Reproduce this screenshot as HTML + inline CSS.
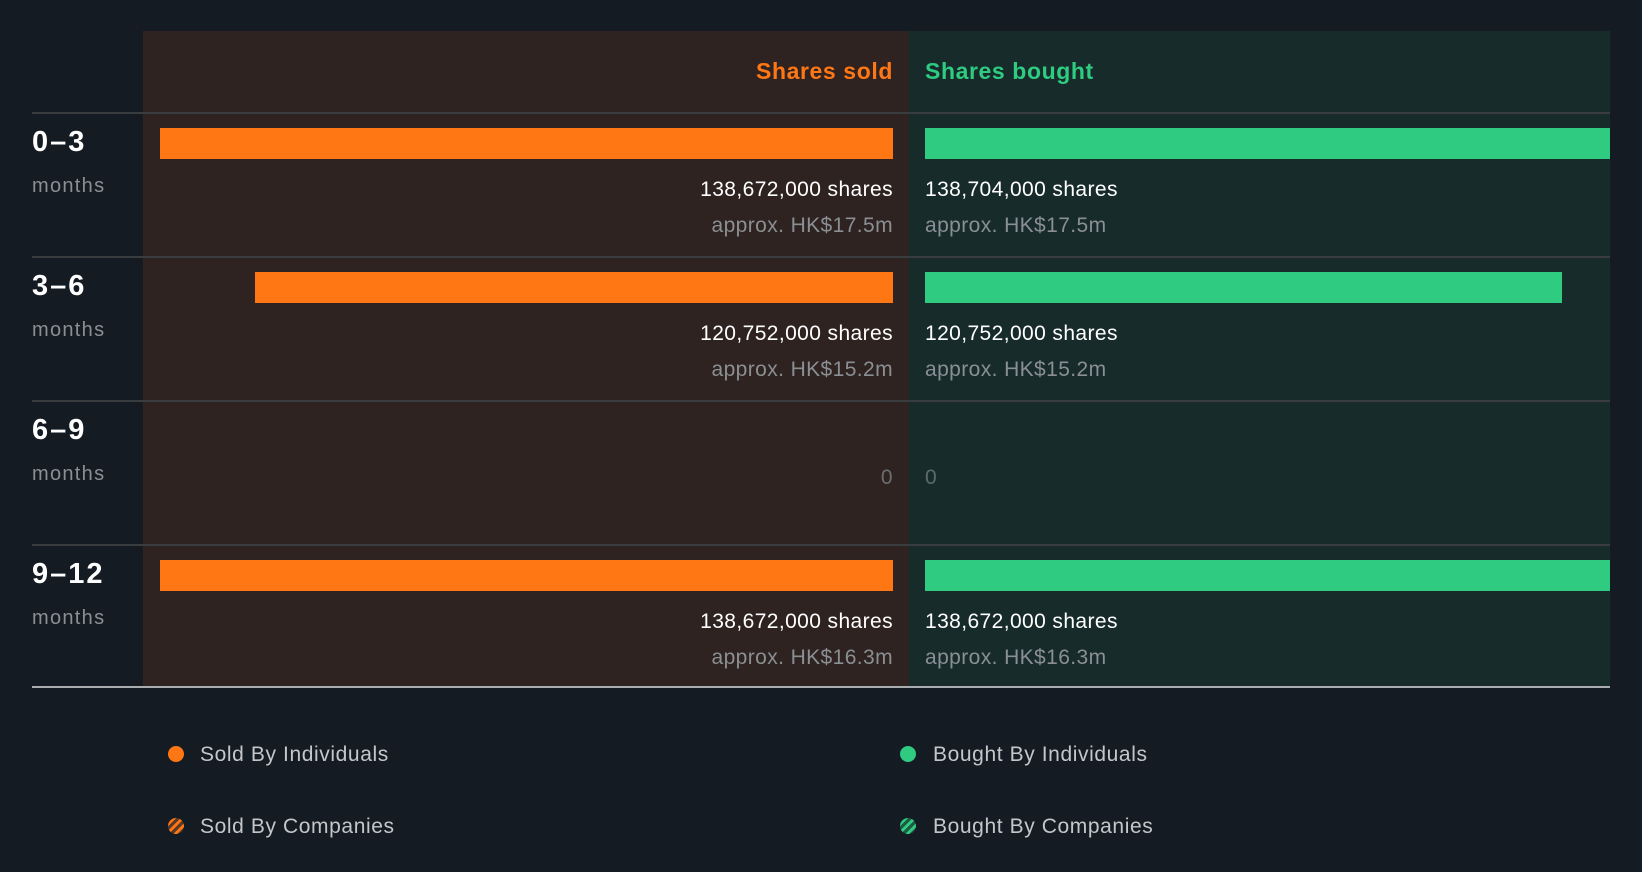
<!DOCTYPE html><html><head><style>
body{margin:0;width:1642px;height:872px;background:#151b23;font-family:"Liberation Sans",sans-serif;position:relative;overflow:hidden}
div{position:absolute}
.t{white-space:nowrap;font-size:21px;line-height:24px;letter-spacing:0.4px}
.r{text-align:right;right:749px}
.l{left:925px}
.w{color:#fff}.g{color:#8a8f93}
.lab{left:32px;color:#fff;font-weight:bold;font-size:29px;line-height:30px;letter-spacing:2px}
.mo{left:32px;color:#8a8f94;font-size:20px;line-height:24px;letter-spacing:1.3px}
.sep{left:32px;width:1578px;height:2px;background:#3a3d40}
.o{background:#ff7715;height:31px}
.gr{background:#2ecb80;height:31px}
.leg{font-size:21px;color:#c4c7ca;line-height:24px;letter-spacing:0.6px}
</style></head><body>
<div style="left:143px;top:31px;width:766px;height:656px;background:#2e2321"></div>
<div style="left:909px;top:31px;width:701px;height:656px;background:#172b2b"></div>
<div class="t" style="right:749px;top:57px;color:#ff7715;font-weight:bold;font-size:23px;line-height:28px;letter-spacing:0.6px">Shares sold</div>
<div class="t" style="left:925px;top:57px;color:#2ecb80;font-weight:bold;font-size:23px;line-height:28px;letter-spacing:0.6px">Shares bought</div>
<div class="sep" style="top:112px"></div>
<div class="sep" style="top:256px"></div>
<div class="sep" style="top:400px"></div>
<div class="sep" style="top:544px"></div>
<div style="left:32px;top:686px;width:1578px;height:2px;background:#a9adb0"></div>

<div class="lab" style="top:127px">0–3</div><div class="mo" style="top:174px">months</div>
<div class="lab" style="top:271px">3–6</div><div class="mo" style="top:318px">months</div>
<div class="lab" style="top:415px">6–9</div><div class="mo" style="top:462px">months</div>
<div class="lab" style="top:559px">9–12</div><div class="mo" style="top:606px">months</div>

<div class="o" style="left:160px;width:733px;top:128px"></div>
<div class="gr" style="left:925px;width:685px;top:128px"></div>
<div class="t r w" style="top:178px">138,672,000 shares</div>
<div class="t l w" style="top:178px">138,704,000 shares</div>
<div class="t r g" style="top:214px">approx. HK$17.5m</div>
<div class="t l g" style="top:214px">approx. HK$17.5m</div>

<div class="o" style="left:255px;width:638px;top:272px"></div>
<div class="gr" style="left:925px;width:637px;top:272px"></div>
<div class="t r w" style="top:322px">120,752,000 shares</div>
<div class="t l w" style="top:322px">120,752,000 shares</div>
<div class="t r g" style="top:358px">approx. HK$15.2m</div>
<div class="t l g" style="top:358px">approx. HK$15.2m</div>

<div class="t r" style="top:466px;color:#6b6e70">0</div>
<div class="t l" style="top:466px;color:#5e6b6b">0</div>

<div class="o" style="left:160px;width:733px;top:560px"></div>
<div class="gr" style="left:925px;width:685px;top:560px"></div>
<div class="t r w" style="top:610px">138,672,000 shares</div>
<div class="t l w" style="top:610px">138,672,000 shares</div>
<div class="t r g" style="top:646px">approx. HK$16.3m</div>
<div class="t l g" style="top:646px">approx. HK$16.3m</div>

<div style="left:168px;top:746px;width:16px;height:16px;border-radius:50%;background:#ff7715"></div>
<div class="leg" style="left:200px;top:743px">Sold By Individuals</div>
<div style="left:900px;top:746px;width:16px;height:16px;border-radius:50%;background:#2ecb80"></div>
<div class="leg" style="left:933px;top:743px">Bought By Individuals</div>
<div style="left:168px;top:818px;width:16px;height:16px;border-radius:50%;background:repeating-linear-gradient(135deg,#5a3a26 0 3px,#ff7715 3px 6px)"></div>
<div class="leg" style="left:200px;top:815px">Sold By Companies</div>
<div style="left:900px;top:818px;width:16px;height:16px;border-radius:50%;background:repeating-linear-gradient(135deg,#1f5a44 0 3px,#2ecb80 3px 6px)"></div>
<div class="leg" style="left:933px;top:815px">Bought By Companies</div>
</body></html>
